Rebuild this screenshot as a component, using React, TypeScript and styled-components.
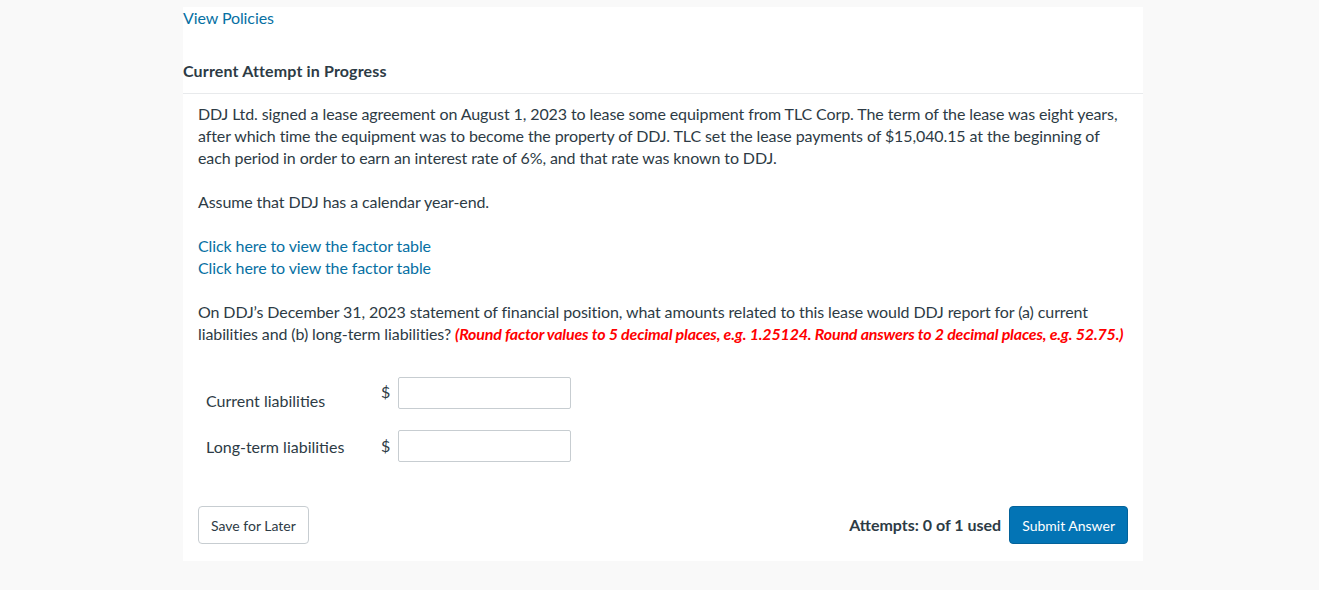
import * as React from 'react';
import styled, { createGlobalStyle } from 'styled-components';

const palette = {
  page: '#f9f9f9',
  panel: '#ffffff',
  text: '#2d3b45',
  link: '#0770a3',
  rule: '#e8eaec',
  red: '#ff0000',
  border: '#c7cdd1',
  primary: '#0374b5',
};

const GlobalStyle = createGlobalStyle`
  body {
    margin: 0;
    background: ${palette.page};
    font-family: Lato, 'Noto Sans', sans-serif;
    color: ${palette.text};
  }
`;

const Panel = styled.div`
  box-sizing: border-box;
  width: 960px;
  margin: 7px 0 0 183px;
  background: ${palette.panel};
  padding-bottom: 17px;
  font-size: 16px;
  line-height: 22px;
  letter-spacing: -0.1px;
`;

const Link = styled.a`
  color: ${palette.link};
  text-decoration: none;
  cursor: pointer;
  display: block;
`;

const Heading = styled.h2`
  margin: 31px 0 0;
  padding-bottom: 11px;
  border-bottom: 1px solid ${palette.rule};
  font-size: 16px;
  line-height: 22px;
  font-weight: 700;
  letter-spacing: 0.15px;
`;

const Question = styled.div`
  padding: 9px 15px 0;
`;

const Para = styled.p`
  margin: 0 0 22px;
`;

const Hint = styled.span`
  color: ${palette.red};
  font-weight: 700;
  font-style: italic;
  letter-spacing: -0.18px;
`;

const AnswerTable = styled.div`
  margin-top: 32px;
  padding-left: 8px;
  display: grid;
  grid-template-columns: 175px 17px 173px;
  row-gap: 18px;
  align-items: start;
  letter-spacing: 0;
`;

const Label = styled.div<{ $offset: number }>`
  padding-top: ${(p) => p.$offset}px;
`;

const Dollar = styled.div<{ $offset: number }>`
  padding-top: ${(p) => p.$offset}px;
`;

const Input = styled.input`
  box-sizing: border-box;
  width: 173px;
  height: 32px;
  border: 1px solid ${palette.border};
  border-radius: 2px;
  font: inherit;
  padding: 0 8px;
`;

const Footer = styled.div`
  margin-top: 44px;
  display: flex;
  align-items: center;
  letter-spacing: 0;
`;

const Button = styled.button<{ $primary?: boolean }>`
  box-sizing: border-box;
  height: 38px;
  padding: 0 12px;
  border-radius: 4px;
  font-family: Lato, 'Noto Sans', sans-serif;
  font-size: 14px;
  cursor: pointer;
  border: 1px solid ${(p) => (p.$primary ? '#03629a' : palette.border)};
  background: ${(p) => (p.$primary ? palette.primary : '#fff')};
  color: ${(p) => (p.$primary ? '#fff' : palette.text)};
`;

const Attempts = styled.span`
  margin-left: auto;
  margin-right: 8px;
  font-weight: 700;
  font-size: 16px;
`;

export default function App() {
  return (
    <>
      <GlobalStyle />
      <Panel>
        <Link>View Policies</Link>
        <Heading>Current Attempt in Progress</Heading>
        <Question>
          <Para>
            DDJ Ltd. signed a lease agreement on August 1, 2023 to lease some equipment from TLC Corp. The term of
            the lease was eight years, after which time the equipment was to become the property of DDJ. TLC set the
            lease payments of $15,040.15 at the beginning of each period in order to earn an interest rate of 6%, and
            that rate was known to DDJ.
          </Para>
          <Para>Assume that DDJ has a calendar year-end.</Para>
          <Para>
            <Link>Click here to view the factor table</Link>
            <Link>Click here to view the factor table</Link>
          </Para>
          <Para>
            On DDJ’s December 31, 2023 statement of financial position, what amounts related to this lease would DDJ
            report for (a) current liabilities and (b) long-term liabilities?{' '}
            <Hint>
              (Round factor values to 5 decimal places, e.g. 1.25124. Round answers to 2 decimal places, e.g. 52.75.)
            </Hint>
          </Para>
          <AnswerTable>
            <Label $offset={13}>Current liabilities</Label>
            <Dollar $offset={4}>$</Dollar>
            <Input type="text" />
            <Label $offset={6}>Long-term liabilities</Label>
            <Dollar $offset={5}>$</Dollar>
            <Input type="text" />
          </AnswerTable>
          <Footer>
            <Button>Save for Later</Button>
            <Attempts>Attempts: 0 of 1 used</Attempts>
            <Button $primary>Submit Answer</Button>
          </Footer>
        </Question>
      </Panel>
    </>
  );
}
